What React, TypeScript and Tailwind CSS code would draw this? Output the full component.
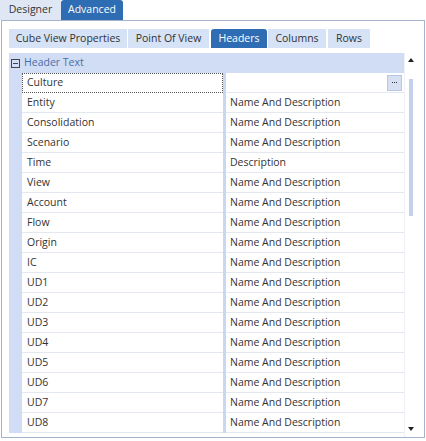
import * as React from "react";

const rows: [string, string][] = [
  ["Entity", "Name And Description"],
  ["Consolidation", "Name And Description"],
  ["Scenario", "Name And Description"],
  ["Time", "Description"],
  ["View", "Name And Description"],
  ["Account", "Name And Description"],
  ["Flow", "Name And Description"],
  ["Origin", "Name And Description"],
  ["IC", "Name And Description"],
  ["UD1", "Name And Description"],
  ["UD2", "Name And Description"],
  ["UD3", "Name And Description"],
  ["UD4", "Name And Description"],
  ["UD5", "Name And Description"],
  ["UD6", "Name And Description"],
  ["UD7", "Name And Description"],
  ["UD8", "Name And Description"],
];

const innerTabs: { label: string; w: string; on?: boolean }[] = [
  { label: "Cube View Properties", w: "w-[118px]" },
  { label: "Point Of View", w: "w-[81px]" },
  { label: "Headers", w: "w-[56px] ml-[1px]", on: true },
  { label: "Columns", w: "w-[58px]" },
  { label: "Rows", w: "w-[42px] ml-[1px]" },
];

export default function App() {
  return (
    <div className="w-[426px] h-[441px] bg-white text-[10.5px] text-[#333] font-['Open_Sans',sans-serif] flex flex-col overflow-hidden">
      {/* Top tabs */}
      <div className="flex h-[20px] shrink-0 items-end bg-white">
        <div className="h-[20px] w-[61px] flex items-center justify-center bg-[#dfe7f4] text-[#333]">Designer</div>
        <div className="h-[20px] w-[62px] flex items-center justify-center bg-[#2e6db3] text-white rounded-t-[3px]">Advanced</div>
      </div>
      {/* Panel */}
      <div className="flex-1 mx-[1px] mb-[3px] border border-[#a5b4cc] flex flex-col px-[7px] pt-[8px]">
        <div className="flex h-[19px] gap-[1px] shrink-0">
          {innerTabs.map((t) => (
            <div
              key={t.label}
              className={
                t.on
                  ? `${t.w} flex items-center justify-center bg-[#2e6db3] text-white rounded-t-[3px]`
                  : `${t.w} flex items-center justify-center bg-[#d6e2f6]`
              }
            >
              {t.label}
            </div>
          ))}
        </div>
        {/* Grid */}
        <div className="mt-[5px] flex flex-1 overflow-hidden">
          <div className="flex-1 flex flex-col">
            <div className="h-[20px] flex items-center bg-[#d0ddf5] shrink-0">
              <div className="w-[13px] flex justify-center">
                <div className="w-[9px] h-[9px] border border-[#444] flex items-center justify-center">
                  <div className="w-[5px] h-[1px] bg-[#444]" />
                </div>
              </div>
              <span className="ml-[2px] text-[#4a6fa8]">Header Text</span>
            </div>
            <div className="flex h-[20px] shrink-0">
              <div className="w-[13px] bg-[#d0ddf5]" />
              <div className="w-[201px] border border-dotted border-[#555] flex items-center pl-[4px]">Culture</div>
              <div className="w-[3px] bg-[#c9d7ef]" />
              <div className="flex-1 flex items-center justify-end pr-[2px] border-b border-[#e3e7ef]">
                <div className="w-[15px] h-[16px] bg-[#d6e0f2] border border-[#b9c7df] flex items-center justify-center gap-[1px]">
                  <div className="w-[1px] h-[1px] bg-[#333]" />
                  <div className="w-[1px] h-[1px] bg-[#333]" />
                  <div className="w-[1px] h-[1px] bg-[#333]" />
                </div>
              </div>
            </div>
            {rows.map(([k, v]) => (
              <div key={k} className="flex h-[20px] shrink-0">
                <div className="w-[13px] bg-[#d0ddf5]" />
                <div className="w-[201px] flex items-center pl-[5px] border-b border-[#e3e7ef]">{k}</div>
                <div className="w-[3px] bg-[#c9d7ef]" />
                <div className="flex-1 flex items-center pl-[4px] border-b border-[#e3e7ef]">{v}</div>
              </div>
            ))}
          </div>
          {/* Scrollbar */}
          <div className="w-[13px] flex flex-col items-center border-l border-[#eef1f6]">
            <div className="h-[14px] w-full flex items-center justify-center">
              <div className="w-0 h-0 border-l-[3px] border-r-[3px] border-b-[4px] border-l-transparent border-r-transparent border-b-[#222]" />
            </div>
            <div className="mt-[12px] w-[4px] h-[137px] bg-[#c3d1ea]" />
            <div className="flex-1" />
            <div className="h-[16px] w-full flex items-center justify-center">
              <div className="w-0 h-0 border-l-[3px] border-r-[3px] border-t-[4px] border-l-transparent border-r-transparent border-t-[#222]" />
            </div>
          </div>
        </div>
      </div>
    </div>
  );
}
